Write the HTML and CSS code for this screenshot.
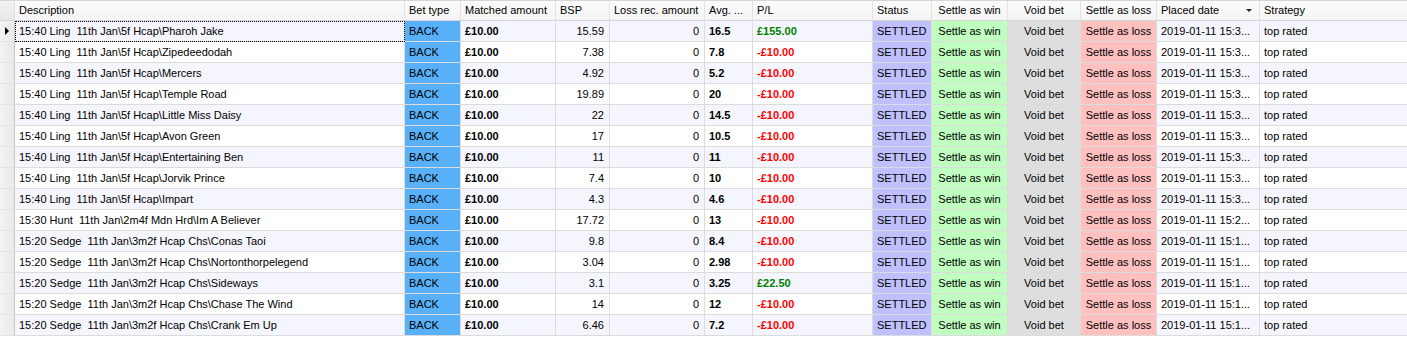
FILE: index.html
```html
<!DOCTYPE html>
<html lang="en">
<head>
    <meta charset="UTF-8">
    <title>Bets</title>
    <link rel="stylesheet" href="styles.css">
</head>
<body>

    <!-- Bets Grid -->
    <div class="grid" id="grid">
        <div class="row head">
            <div class="cell rh"></div>
            <div class="cell">Description</div>
            <div class="cell">Bet type</div>
            <div class="cell">Matched amount</div>
            <div class="cell">BSP</div>
            <div class="cell">Loss rec. amount</div>
            <div class="cell">Avg. ...</div>
            <div class="cell">P/L</div>
            <div class="cell">Status</div>
            <div class="cell center">Settle as win</div>
            <div class="cell center">Void bet</div>
            <div class="cell center">Settle as loss</div>
            <div class="cell sorted">Placed date <span class="sort-arrow"></span></div>
            <div class="cell">Strategy</div>
        </div>
    </div>

    <script>
        const bets = [
            ["15:40 Ling  11th Jan\\5f Hcap\\Pharoh Jake", "15.59", "16.5", "£155.00", "15:3"],
            ["15:40 Ling  11th Jan\\5f Hcap\\Zipedeedodah", "7.38", "7.8", "-£10.00", "15:3"],
            ["15:40 Ling  11th Jan\\5f Hcap\\Mercers", "4.92", "5.2", "-£10.00", "15:3"],
            ["15:40 Ling  11th Jan\\5f Hcap\\Temple Road", "19.89", "20", "-£10.00", "15:3"],
            ["15:40 Ling  11th Jan\\5f Hcap\\Little Miss Daisy", "22", "14.5", "-£10.00", "15:3"],
            ["15:40 Ling  11th Jan\\5f Hcap\\Avon Green", "17", "10.5", "-£10.00", "15:3"],
            ["15:40 Ling  11th Jan\\5f Hcap\\Entertaining Ben", "11", "11", "-£10.00", "15:3"],
            ["15:40 Ling  11th Jan\\5f Hcap\\Jorvik Prince", "7.4", "10", "-£10.00", "15:3"],
            ["15:40 Ling  11th Jan\\5f Hcap\\Impart", "4.3", "4.6", "-£10.00", "15:3"],
            ["15:30 Hunt  11th Jan\\2m4f Mdn Hrd\\Im A Believer", "17.72", "13", "-£10.00", "15:2"],
            ["15:20 Sedge  11th Jan\\3m2f Hcap Chs\\Conas Taoi", "9.8", "8.4", "-£10.00", "15:1"],
            ["15:20 Sedge  11th Jan\\3m2f Hcap Chs\\Nortonthorpelegend", "3.04", "2.98", "-£10.00", "15:1"],
            ["15:20 Sedge  11th Jan\\3m2f Hcap Chs\\Sideways", "3.1", "3.25", "£22.50", "15:1"],
            ["15:20 Sedge  11th Jan\\3m2f Hcap Chs\\Chase The Wind", "14", "12", "-£10.00", "15:1"],
            ["15:20 Sedge  11th Jan\\3m2f Hcap Chs\\Crank Em Up", "6.46", "7.2", "-£10.00", "15:1"]
        ];

        const grid = document.getElementById("grid");

        bets.forEach((bet, i) => {
            const [desc, bsp, avg, pl, time] = bet;
            const row = document.createElement("div");
            row.classList.add("row");
            if (i % 2 === 0) row.classList.add("odd");
            row.innerHTML = `
                <div class="cell rh">${i === 0 ? '<span class="current"></span>' : ''}</div>
                <div class="cell desc${i === 0 ? ' focus' : ''}">${desc}</div>
                <div class="cell back">BACK</div>
                <div class="cell bold">£10.00</div>
                <div class="cell num">${bsp}</div>
                <div class="cell num">0</div>
                <div class="cell bold">${avg}</div>
                <div class="cell bold ${pl.startsWith("-") ? "loss" : "profit"}">${pl}</div>
                <div class="cell status">SETTLED</div>
                <div class="cell center win">Settle as win</div>
                <div class="cell center void">Void bet</div>
                <div class="cell center lose">Settle as loss</div>
                <div class="cell">2019-01-11 ${time}...</div>
                <div class="cell">top rated</div>
            `;
            grid.appendChild(row);
        });
    </script>
</body>
</html>
```

FILE: styles.css
```css
body {
    font-family: 'Liberation Sans', Arial, sans-serif;
    font-size: 11px;
    color: #000;
    background-color: #fff;
    margin: 0;
    padding: 0;
}

/* Grid */
.grid {
    width: 1407px;
}

.row {
    display: grid;
    grid-template-columns: 15px 390px 56px 95px 54px 95px 48px 120px 59px 76px 73px 76px 103px 147px;
    height: 21px;
    background-color: #fff;
}

.row.odd {
    background-color: #f5f5fd;
}

.cell {
    box-sizing: border-box;
    border-right: 1px solid #dcdcdc;
    border-bottom: 1px solid #dcdcdc;
    padding: 0 4px;
    line-height: 20px;
    white-space: pre;
    overflow: hidden;
}

.cell:last-child {
    border-right: none;
}

/* Header */
.row.head {
    background: linear-gradient(#fcfcfc, #f4f4f4);
    border-top: 1px solid #d6d6d6;
    height: 21px;
    box-sizing: border-box;
}

.row.head .cell {
    line-height: 19px;
    border-right-color: #e3e3e3;
    border-bottom-color: #d6d6d6;
}

.sorted {
    display: flex;
    justify-content: space-between;
    align-items: center;
}

.sort-arrow {
    width: 0;
    height: 0;
    border-left: 3px solid transparent;
    border-right: 3px solid transparent;
    border-top: 3px solid #222;
    margin-right: 3px;
}

/* Row header */
.rh {
    background: linear-gradient(90deg, #f4f4f4, #e9e9e9);
    padding: 0;
    border-right-color: #c8c8c8;
    border-bottom-color: #e4e4e4;
    position: relative;
}

.row.head .rh {
    background: linear-gradient(#f2f2f2, #e8e8e8);
}

.current {
    position: absolute;
    left: 5px;
    top: 6px;
    width: 0;
    height: 0;
    border-top: 4px solid transparent;
    border-bottom: 4px solid transparent;
    border-left: 4px solid #000;
}

.focus {
    outline: 1px dotted #000;
    outline-offset: -1px;
}

/* Cell kinds */
.center {
    text-align: center;
}

.num {
    text-align: right;
    padding-right: 5px;
}

.bold {
    font-weight: bold;
}

.profit {
    color: #008000;
}

.loss {
    color: #ff0000;
}

.back {
    background-color: #58b0f8;
}

.status {
    background-color: #c0c0ff;
}

.win {
    background-color: #c0ffc0;
}

.void {
    background-color: #dedede;
}

.lose {
    background-color: #ffc0c0;
}
```
